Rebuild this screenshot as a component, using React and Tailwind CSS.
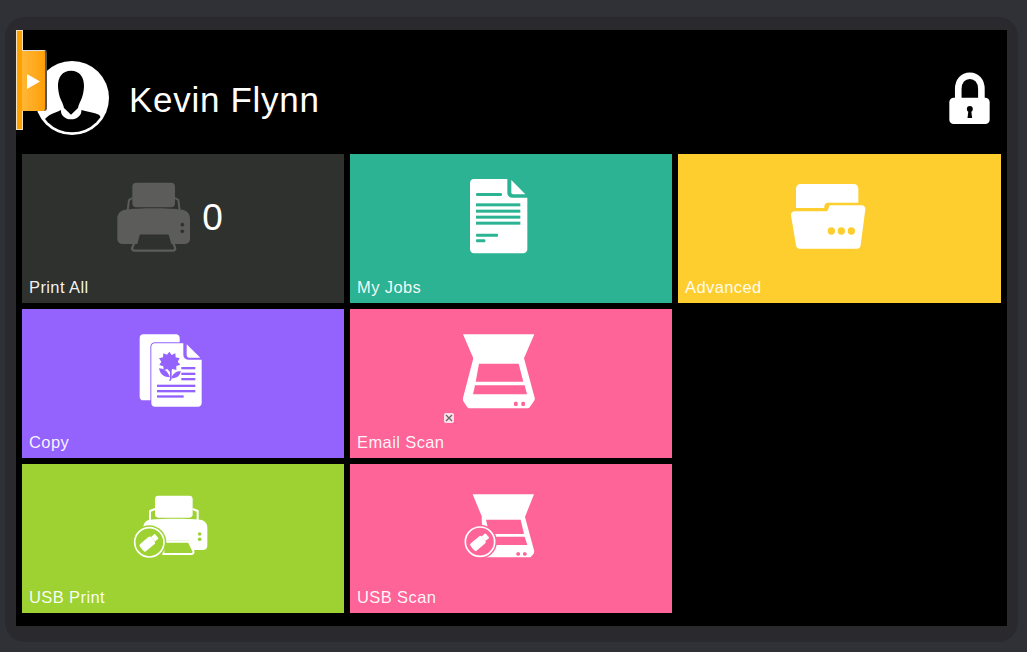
const TEAL = "#2cb393";
const PINK = "#fe6498";
const GREEN = "#9dd232";
const PURPLE = "#9463fe";
const YELLOW = "#fece2f";
const DARK = "#2f312f";

function Avatar() {
  return (
    <svg width="74" height="74" viewBox="105 183 222 222" className="shrink-0">
      <defs>
        <clipPath id="av"><circle cx="216" cy="294" r="103" /></clipPath>
      </defs>
      <circle cx="216" cy="294" r="111" fill="#fff" />
      <g clipPath="url(#av)">
        <path d="M213 212c-26 0-40 20-39 48 1 14 3 28 10 42 3 6 6 12 8 22l21 20 21-20c2-10 5-16 8-22 7-14 9-28 10-42 1-28-13-48-39-48z" fill="#000" />
        <path d="M183 330c-20 10-42 14-50 32-6 14-8 32-8 48h190c0-26-2-46-18-66-16-6-32-8-53-14 2 14-12 28-31 28s-32-14-30-28z" fill="#000" />
      </g>
    </svg>
  );
}

function LockIcon() {
  return (
    <svg width="41" height="53" viewBox="57 218 124 158" className="shrink-0">
      <path d="M85 300v-32c0-24 14-40 35-40s35 16 35 40v32" fill="none" stroke="#fff" strokeWidth="20" />
      <rect x="58" y="295" width="122" height="79" rx="13" fill="#fff" />
      <circle cx="120" cy="329" r="9" fill="#000" />
      <path d="M116 332h8l3 24h-14z" fill="#000" />
    </svg>
  );
}

function PrinterIcon() {
  return (
    <svg width="80" height="84" viewBox="45 12 240 252" className="shrink-0">
      <rect x="97" y="38" width="128" height="74" rx="12" fill="#5c5d5b" />
      <path d="M83 122l4-32 10-6M239 122l-4-32-10-6" fill="none" stroke="#5c5d5b" strokeWidth="6" />
      <path d="M76 119c40-6 130-6 170 0 14 2 24 12 24 26v63c0 8-6 14-14 14h-42l-8-30H120l-8 30H66c-8 0-14-6-14-14v-63c0-14 10-24 24-26z" fill="#5c5d5b" />
      <path d="M116 190h92l17 42c2 6-1 10-7 10H104c-6 0-9-4-7-10z" fill="none" stroke="#5c5d5b" strokeWidth="7" />
      <circle cx="247" cy="164" r="5.5" fill={DARK} />
      <circle cx="247" cy="184" r="5.5" fill={DARK} />
    </svg>
  );
}

function DocIcon() {
  return (
    <svg width="100" height="84" viewBox="-3 12 300 252" className="shrink-0">
      <path d="M72 27h100v42c0 8 6 14 14 14h46v155c0 7-5 12-12 12H72c-7 0-12-5-12-12V39c0-7 5-12 12-12z" fill="#fff" />
      <path d="M184 30l42 43h-36c-4 0-6-2-6-6z" fill="#fff" />
      <g fill={TEAL}>
        <rect x="78" y="69" width="78" height="9" rx="4" />
        <rect x="78" y="100" width="133" height="9" />
        <rect x="78" y="119" width="133" height="9" />
        <rect x="78" y="137" width="133" height="9" />
        <rect x="78" y="155" width="133" height="9" />
        <rect x="78" y="191" width="66" height="9" rx="3" />
        <rect x="78" y="208" width="28" height="9" rx="3" />
      </g>
    </svg>
  );
}

function FolderIcon() {
  return (
    <svg width="100" height="84" viewBox="-9 12 300 252" className="shrink-0">
      <path d="M58 42h160c8 0 14 6 14 14v42H140c-6 0-9 4-10 10v6H45V56c0-8 6-14 13-14z" fill="#fff" />
      <path d="M42 124h92c4 0 7-2 8-7l2-7c1-3 3-4 6-4h92c7 0 12 5 11 12l-14 108c-1 7-5 10-11 10H56c-6 0-10-3-11-10l-15-90c-1-7 5-12 12-12z" fill="#fff" />
      <g fill={YELLOW}>
        <circle cx="151" cy="183" r="11" />
        <circle cx="181" cy="183" r="11" />
        <circle cx="211" cy="183" r="11" />
      </g>
    </svg>
  );
}

function CopyIcon() {
  return (
    <svg width="100" height="84" viewBox="3 12 300 252" className="shrink-0">
      <path d="M70 28h98c6 0 11 5 11 10v14H105c-8 0-14 6-14 14v160H70c-7 0-11-5-11-11V39c0-6 4-11 11-11z" fill="#fff" />
      <path d="M105 55h85v35c0 8 6 14 14 14h41v130c0 7-5 11-11 11H105c-7 0-11-4-11-11V66c0-6 4-11 11-11z" fill="#fff" />
      <path d="M200 58l41 40h-33c-5 0-8-3-8-8z" fill="#fff" />
      <g fill={PURPLE}>
        <path d="M148 80l7 10 11-5 1 12 12 3-6 10 8 9-12 4v12l-12-3-7 9-8-9-11 4-1-12-12-4 6-10-7-10 12-3 1-12 11 4z" />
        <path d="M150 130h5v30c0 3-1 5-3 7h-5c1-2 3-4 3-7z" />
        <path d="M117 130c14 0 26 8 33 27-18 0-30-9-33-27zM182 138c0 14-12 22-28 22 3-12 14-22 28-22z" />
        <rect x="184" y="126" width="42" height="7" />
        <rect x="184" y="143" width="42" height="7" />
        <rect x="184" y="159" width="42" height="7" />
        <rect x="111" y="179" width="115" height="7" />
        <rect x="111" y="195" width="115" height="7" />
        <rect x="111" y="211" width="80" height="7" />
      </g>
    </svg>
  );
}

function ScanIcon() {
  return (
    <svg width="100" height="84" viewBox="57 12 300 252" className="shrink-0">
      <path d="M99 28h214l-32 74H131z" fill="#fff" />
      <path d="M130 100h152l32 118c1 4 0 7-2 10l-13 19c-1 2-3 3-6 3H118c-3 0-5-1-6-3l-11-17c-2-3-3-7-2-11z" fill="#fff" />
      <path d="M147 116h119l14 54H137z" fill={PINK} />
      <path d="M135 181h149l7 27H129z" fill={PINK} />
      <rect x="252" y="230" width="11" height="13" rx="4" fill={PINK} />
      <rect x="274" y="230" width="11" height="13" rx="4" fill={PINK} />
    </svg>
  );
}

function UsbBadge({ cx, cy, bg }) {
  return (
    <g>
      <circle cx={cx} cy={cy} r="51" fill={bg} />
      <circle cx={cx} cy={cy} r="44" fill="none" stroke="#fff" strokeWidth="5" />
      <g transform={`rotate(-40 ${cx} ${cy})`}>
        <rect x={cx - 30} y={cy - 14} width="44" height="28" rx="6" fill="#fff" />
        <rect x={cx + 14} y={cy - 9} width="15" height="18" rx="2" fill="#fff" />
      </g>
    </g>
  );
}

function UsbPrintIcon() {
  return (
    <svg width="100" height="84" viewBox="3 -3 300 252" className="shrink-0">
      <rect x="105" y="32" width="113" height="66" rx="10" fill="#fff" />
      <path d="M90 108V78l15-6M233 108V78l-15-6" fill="none" stroke="#fff" strokeWidth="6" />
      <path d="M90 104c40-4 110-4 150 0 13 1 22 10 22 24v54c0 8-6 13-13 13h-32l-10-28H130v28H70V128c0-14 8-23 20-24z" fill="#fff" />
      <path d="M130 170h76l14 28c2 5-1 9-6 9H130z" fill="none" stroke="#fff" strokeWidth="6" />
      <circle cx="239" cy="147" r="5.5" fill={GREEN} />
      <circle cx="239" cy="163" r="5.5" fill={GREEN} />
      <UsbBadge cx={88} cy={172} bg={GREEN} />
    </svg>
  );
}

function UsbScanIcon() {
  return (
    <svg width="100" height="84" viewBox="-3 -3 300 252" className="shrink-0">
      <path d="M68 28h184l-28 70H97z" fill="#fff" />
      <path d="M95 96h130l27 100c1 4 0 8-2 11l-7 8c-1 1-3 2-5 2H100z" fill="#fff" />
      <path d="M108 104h104l10 43H118z" fill={PINK} />
      <path d="M120 155h104l8 25H120z" fill={PINK} />
      <rect x="199" y="202" width="11" height="10" rx="4" fill={PINK} />
      <rect x="219" y="202" width="11" height="10" rx="4" fill={PINK} />
      <UsbBadge cx={90} cy={170} bg={PINK} />
    </svg>
  );
}

function Label({ children }) {
  return (
    <div className="pb-[6px] pl-[7px] text-[16.5px] leading-[20px] tracking-[0.4px] text-white/95">{children}</div>
  );
}

function Tile({ label, color, children, overlay }) {
  return (
    <div className={`relative flex h-[149px] flex-col justify-between ${color}`}>
      <div className="flex justify-center pr-6 pt-5">{children}</div>
      <Label>{label}</Label>
      {overlay}
    </div>
  );
}

export default function App() {
  return (
    <div
      className="h-[652px] w-[1027px] overflow-hidden bg-[#303037] pl-[5px] pt-[17px]"
      style={{ fontFamily: '"Liberation Sans", Arial, sans-serif' }}
    >
      <div className="h-[625px] w-[1013px] rounded-[20px] bg-[#29292e] pb-[16px] pl-[11px] pr-[11px] pt-[13px]">
        <div className="relative h-[596px] bg-black px-[6px]">
          <div className="flex h-[124px] items-center justify-between pt-[12px] pl-[13px] pr-[11px]">
            <div className="flex items-center gap-[20px]">
              <Avatar />
              <span className="pt-[2px] text-[35px] leading-none tracking-[0.7px] text-white">Kevin Flynn</span>
            </div>
            <LockIcon />
          </div>

          <div className="grid grid-cols-[322px_322px_323px] gap-[6px]">
            <div className="relative flex h-[149px] flex-col justify-between bg-[#2f312f]">
              <div className="flex items-center justify-center gap-[7px] pr-[28px] pt-5">
                <PrinterIcon />
                <span className="pt-[2px] text-[37px] leading-none text-white">0</span>
              </div>
              <Label>Print All</Label>
            </div>
            <Tile label="My Jobs" color="bg-[#2cb393]"><DocIcon /></Tile>
            <Tile label="Advanced" color="bg-[#fece2f]"><FolderIcon /></Tile>
            <Tile label="Copy" color="bg-[#9463fe]"><CopyIcon /></Tile>
            <Tile
              label="Email Scan"
              color="bg-[#fe6498]"
              overlay={
                <div className="absolute left-[94px] top-[104px] flex h-[10px] w-[10px] items-center justify-center rounded-[2px] bg-white/80">
                  <svg width="8" height="8" viewBox="0 0 8 8">
                    <path d="M1 1l6 6M7 1L1 7" stroke="#666" strokeWidth="1.3" />
                  </svg>
                </div>
              }
            >
              <ScanIcon />
            </Tile>
            <div />
            <Tile label="USB Print" color="bg-[#9dd232]"><UsbPrintIcon /></Tile>
            <Tile label="USB Scan" color="bg-[#fe6498]"><UsbScanIcon /></Tile>
          </div>

          <div className="absolute left-0 top-0 h-[100px] w-[7px] border border-[#f3e3c0] bg-[#ff9f00]" />
          <div className="absolute left-[6px] top-[20px] flex h-[61px] w-[25px] items-center rounded-r-[3px] border-r-2 border-t border-r-[#555] border-t-[#ddd] bg-gradient-to-r from-[#ffb733] to-[#ff9f00]">
            <svg width="15" height="17" viewBox="0 0 15 17" className="ml-[4px]">
              <path d="M1 1l13 7.5L1 16z" fill="#fff" />
            </svg>
          </div>
        </div>
      </div>
    </div>
  );
}
